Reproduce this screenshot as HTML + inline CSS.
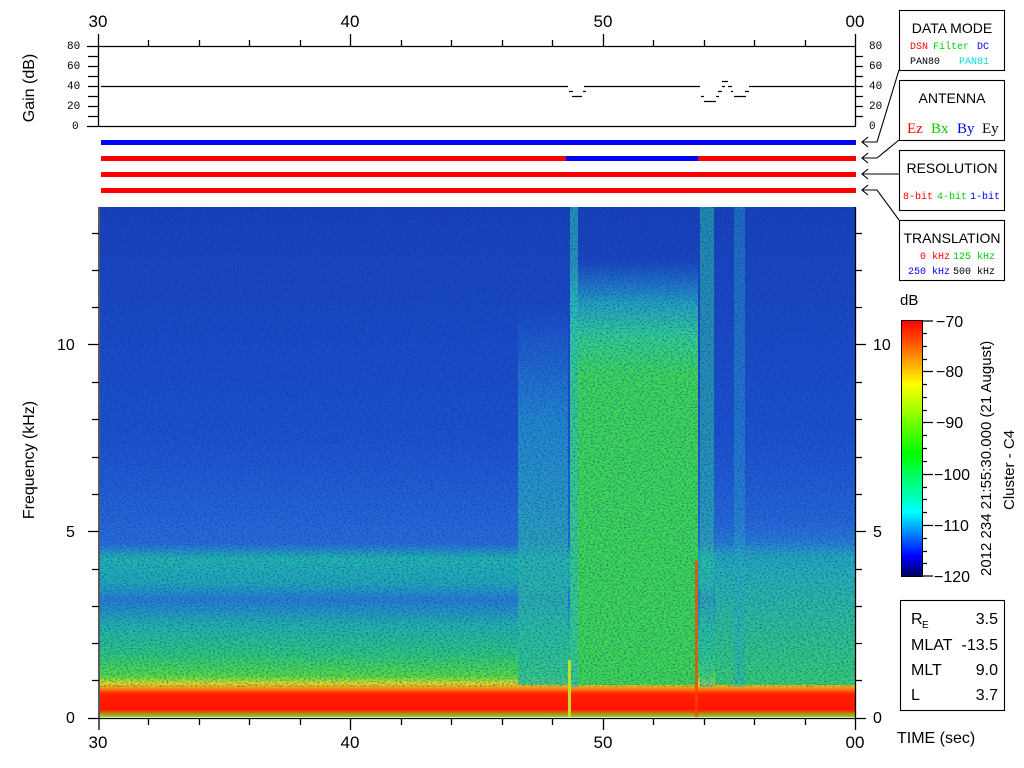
<!DOCTYPE html>
<html><head><meta charset="utf-8"><style>
html,body{margin:0;padding:0;background:#fff;width:1024px;height:768px;overflow:hidden}
svg{display:block}
text{font-family:"Liberation Sans",sans-serif;fill:#000}
.m,.m text{font-family:"Liberation Mono",monospace}
</style></head><body>
<svg width="1024" height="768" viewBox="0 0 1024 768" xmlns="http://www.w3.org/2000/svg">
<defs>
<linearGradient id="bg" x1="0" y1="0" x2="0" y2="1">
<stop offset="0" stop-color="#1a40bc"/>
<stop offset="0.45" stop-color="#1e50d0"/>
<stop offset="0.66" stop-color="#2a6cdc"/>
<stop offset="0.69" stop-color="#22b8b0"/>
<stop offset="0.74" stop-color="#22a8b8"/>
<stop offset="0.77" stop-color="#2a7cd6"/>
<stop offset="0.82" stop-color="#24b4ac"/>
<stop offset="0.88" stop-color="#30cc78"/>
<stop offset="0.92" stop-color="#58e040"/>
<stop offset="0.935" stop-color="#e8e020"/>
<stop offset="0.955" stop-color="#ff2000"/>
<stop offset="0.985" stop-color="#ff1400"/>
<stop offset="1" stop-color="#80e020"/>
</linearGradient>
<linearGradient id="blk" x1="0" y1="0" x2="0" y2="1">
<stop offset="0" stop-color="#2a9ad8" stop-opacity="0"/>
<stop offset="0.1" stop-color="#28b8c0" stop-opacity="0.8"/>
<stop offset="0.18" stop-color="#34d090"/>
<stop offset="0.27" stop-color="#40d858"/>
<stop offset="1" stop-color="#40d850"/>
</linearGradient>
<linearGradient id="lft" x1="0" y1="0" x2="0" y2="1">
<stop offset="0" stop-color="#2a90d8" stop-opacity="0"/>
<stop offset="0.3" stop-color="#28a0d0" stop-opacity="0.8"/>
<stop offset="1" stop-color="#30c890"/>
</linearGradient>
<linearGradient id="rgt" x1="0" y1="0" x2="0" y2="1">
<stop offset="0" stop-color="#2a80d8" stop-opacity="0"/>
<stop offset="0.3" stop-color="#28b0b8"/>
<stop offset="1" stop-color="#38d070"/>
</linearGradient>
<linearGradient id="cb" x1="0" y1="0" x2="0" y2="1">
<stop offset="0" stop-color="#ff0000"/>
<stop offset="0.13" stop-color="#ff8000"/>
<stop offset="0.25" stop-color="#ffff00"/>
<stop offset="0.52" stop-color="#00ff00"/>
<stop offset="0.75" stop-color="#00ffff"/>
<stop offset="0.92" stop-color="#0000ff"/>
<stop offset="1" stop-color="#000060"/>
</linearGradient>
<filter id="nz" x="0" y="0" width="1" height="1">
<feTurbulence type="fractalNoise" baseFrequency="0.45 0.7" numOctaves="1" seed="3"/>
<feColorMatrix type="matrix" values="0 0 0 0 0  0 0 0 0 0.05  0 0 0 0 0.3  0 0 0 -3 1.7"/>
</filter>
</defs>

<g font-size="17">
<text x="98" y="27" text-anchor="middle">30</text>
<text x="350" y="27" text-anchor="middle">40</text>
<text x="603" y="27" text-anchor="middle">50</text>
<text x="855" y="27" text-anchor="middle">00</text>
<text x="98" y="748" text-anchor="middle">30</text>
<text x="350" y="748" text-anchor="middle">40</text>
<text x="603" y="748" text-anchor="middle">50</text>
<text x="855" y="748" text-anchor="middle">00</text>
</g>

<g stroke="#000" stroke-width="1.3" fill="none">
<line x1="87" y1="46.5" x2="856" y2="46.5"/>
<line x1="87" y1="126.5" x2="856" y2="126.5"/>
<line x1="98.5" y1="34" x2="98.5" y2="126"/>
<line x1="855.5" y1="34" x2="855.5" y2="126"/>
<line x1="350.5" y1="34" x2="350.5" y2="46"/>
<line x1="603.5" y1="34" x2="603.5" y2="46"/>
<path d="M148.5 40v6M199.5 40v6M249.5 40v6M300.5 40v6M401.5 40v6M451.5 40v6M502.5 40v6M552.5 40v6M653.5 40v6M704.5 40v6M754.5 40v6M805.5 40v6"/>
<path d="M88 56.5h10M88 66.5h10M88 76.5h10M88 86.5h10M88 96.5h10M88 106.5h10M88 116.5h10"/>
<path d="M855 56.5h8M855 66.5h8M855 76.5h8M855 86.5h8M855 96.5h8M855 106.5h8M855 116.5h8"/>
<path d="M101 86.5H568M569 91.5h4M572 96.5h10M583 91.5h3M584 86.5H700M701 96.5h3M704 101.5h12M716 96.5h3M718 91.5h4M722 86.5h3M722 81.5h6M728 86.5h4M731 91.5h2M734 96.5h12M745 91.5h4M749 86.5H855"/>
</g>
<g font-size="11" class="m">
<text x="67" y="49">80</text><text x="67" y="69">60</text><text x="67" y="89">40</text><text x="67" y="109">20</text><text x="72" y="129">0</text>
<text x="869" y="49">80</text><text x="869" y="69">60</text><text x="869" y="89">40</text><text x="869" y="109">20</text><text x="869" y="129">0</text>
</g>
<text transform="translate(34,88) rotate(-90)" font-size="16" text-anchor="middle">Gain (dB)</text>

<rect x="101" y="140" width="755" height="5" fill="#0000ff"/>
<rect x="101" y="156" width="755" height="5" fill="#ff0000"/>
<rect x="566" y="156" width="132" height="5" fill="#0000ff"/>
<rect x="101" y="172" width="755" height="5" fill="#ff0000"/>
<rect x="101" y="188" width="755" height="5" fill="#ff0000"/>

<g stroke="#000" stroke-width="1.1" fill="none">
<path d="M899 70L877 142H862M868 137L862 142L868 147"/>
<path d="M899 140L877 158H862M868 153L862 158L868 163"/>
<path d="M899 174H862M868 169L862 174L868 179"/>
<path d="M899 220L877 190H862M868 185L862 190L868 195"/>
<rect x="899.5" y="10.5" width="105" height="60"/>
<rect x="899.5" y="80.5" width="105" height="60"/>
<rect x="899.5" y="150.5" width="105" height="60"/>
<rect x="899.5" y="220.5" width="105" height="60"/>
<rect x="900.5" y="600.5" width="104" height="110"/>
</g>
<g font-size="14" text-anchor="middle">
<text x="952" y="33">DATA MODE</text>
<text x="952" y="103">ANTENNA</text>
<text x="952" y="173">RESOLUTION</text>
<text x="952" y="243">TRANSLATION</text>
</g>
<g font-size="10" class="m">
<text x="910" y="49" style="fill:#f00">DSN</text><text x="933" y="49" style="fill:#0c0">Filter</text><text x="977" y="49" style="fill:#00f">DC</text>
<text x="910" y="64">PAN80</text><text x="959" y="64" style="fill:#0dd">PAN81</text>
<text x="903" y="199" style="fill:#f00">8-bit</text><text x="937" y="199" style="fill:#0c0">4-bit</text><text x="970" y="199" style="fill:#00f">1-bit</text>
<text x="920" y="259" style="fill:#f00">0 kHz</text><text x="953" y="259" style="fill:#0c0">125 kHz</text>
<text x="908" y="274" style="fill:#00f">250 kHz</text><text x="953" y="274">500 kHz</text>
</g>
<g font-size="15">
<text x="907" y="133" style="fill:#f00;font-family:'Liberation Serif'">Ez</text>
<text x="931" y="133" style="fill:#0c0;font-family:'Liberation Serif'">Bx</text>
<text x="957" y="133" style="fill:#00f;font-family:'Liberation Serif'">By</text>
<text x="982" y="133" style="font-family:'Liberation Serif'">Ey</text>
</g>

<rect x="100" y="207" width="755" height="510" fill="url(#bg)"/>
<rect x="518" y="305" width="50" height="380" fill="url(#lft)" opacity="0.85"/>
<rect x="715" y="520" width="140" height="165" fill="url(#rgt)"/>
<rect x="570" y="260" width="128" height="425" fill="url(#blk)"/>
<rect x="570" y="207" width="8" height="480" fill="#30c8b8" opacity="0.6"/>
<rect x="700" y="207" width="14" height="480" fill="#30c8a0" opacity="0.55"/>
<rect x="734" y="207" width="11" height="480" fill="#2ab0c8" opacity="0.4"/>
<rect x="100" y="207" width="755" height="480" filter="url(#nz)" opacity="0.5"/>
<rect x="568" y="660" width="3" height="57" fill="#c0e020"/>
<rect x="695" y="560" width="3" height="157" fill="#ff4000" opacity="0.7"/>

<g stroke="#000" stroke-width="1.3" fill="none">
<line x1="99" y1="207" x2="99" y2="718"/>
<line x1="855.5" y1="207" x2="855.5" y2="718"/>
<line x1="88" y1="718.5" x2="866" y2="718.5"/>
<path d="M99 718v12M350.5 718v12M603.5 718v12M855.5 718v12"/>
<path d="M148.5 718v7M199.5 718v7M249.5 718v7M300.5 718v7M401.5 718v7M451.5 718v7M502.5 718v7M552.5 718v7M653.5 718v7M704.5 718v7M754.5 718v7M805.5 718v7"/>
<path d="M88 344.5h11M88 531.5h11M92 680.5h7M92 643.5h7M92 606.5h7M92 569.5h7M92 494.5h7M92 457.5h7M92 419.5h7M92 382.5h7M92 307.5h7M92 270.5h7M92 233.5h7"/>
<path d="M855 344.5h11M855 531.5h11M855 680.5h7M855 643.5h7M855 606.5h7M855 569.5h7M855 494.5h7M855 457.5h7M855 419.5h7M855 382.5h7M855 307.5h7M855 270.5h7M855 233.5h7"/>
</g>
<g font-size="16">
<text x="57" y="350">10</text><text x="66" y="537">5</text><text x="66" y="723">0</text>
<text x="873" y="350">10</text><text x="873" y="537">5</text><text x="873" y="723">0</text>
</g>
<text transform="translate(34,460) rotate(-90)" font-size="16" text-anchor="middle">Frequency (kHz)</text>
<text x="897" y="743" font-size="16">TIME (sec)</text>

<text x="900" y="305" font-size="15">dB</text>
<rect x="901.5" y="320.5" width="21" height="256" fill="url(#cb)" stroke="#000"/>
<g stroke="#000" stroke-width="1.2">
<path d="M922 321h11M922 371.5h11M922 422.5h11M922 474.5h11M922 525.5h11M922 576h11"/>
<path d="M922 333.5h5M922 346.5h5M922 359.5h5M922 384.5h5M922 397.5h5M922 410.5h5M922 435.5h5M922 448.5h5M922 461.5h5M922 487.5h5M922 499.5h5M922 512.5h5M922 538.5h5M922 551.5h5M922 563.5h5"/>
</g>
<g font-size="16">
<text x="936" y="327">−70</text><text x="936" y="377">−80</text><text x="936" y="428">−90</text>
<text x="934" y="480">−100</text><text x="934" y="531">−110</text><text x="934" y="582">−120</text>
</g>
<text transform="translate(991,576) rotate(-90)" font-size="15">2012 234 21:55:30.000 (21 August)</text>
<text transform="translate(1014,510) rotate(-90)" font-size="15">Cluster - C4</text>

<g font-size="16">
<text x="911" y="624">R</text><text x="922" y="628" font-size="10">E</text><text x="998" y="624" text-anchor="end">3.5</text>
<text x="911" y="650">MLAT</text><text x="998" y="650" text-anchor="end">-13.5</text>
<text x="911" y="675">MLT</text><text x="998" y="675" text-anchor="end">9.0</text>
<text x="911" y="700">L</text><text x="998" y="700" text-anchor="end">3.7</text>
</g>
</svg>
</body></html>
